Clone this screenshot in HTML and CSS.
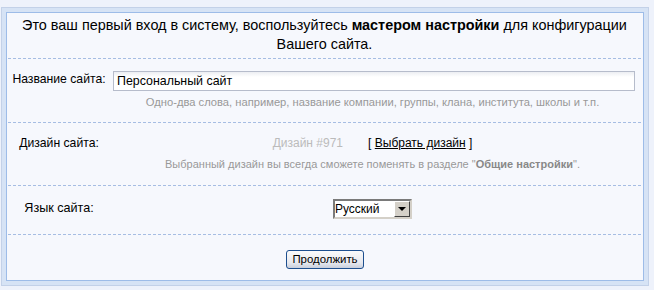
FILE: index.html
```html
<!DOCTYPE html>
<html lang="ru">
<head>
    <meta charset="UTF-8">
    <title>Мастер настройки</title>
    <link rel="stylesheet" href="styles.css">
</head>
<body>
    <div class="frame">
        <form class="panel" id="setup-form">
            <div class="intro">
                Это ваш первый вход в систему, воспользуйтесь <b>мастером настройки</b> для конфигурации Вашего сайта.
            </div>

            <div class="row row-name">
                <label class="row-label" for="site-name">Название сайта:</label>
                <div class="row-value">
                    <input type="text" id="site-name" class="text-input" value="Персональный сайт">
                    <div class="hint hint-name">Одно-два слова, например, название компании, группы, клана, института, школы и т.п.</div>
                </div>
            </div>

            <div class="row row-design">
                <div class="row-label">Дизайн сайта:</div>
                <div class="row-value">
                    <div class="design-line">
                        <span class="design-id">Дизайн #971</span>
                        <span class="design-pick">[ <a href="#">Выбрать дизайн</a> ]</span>
                    </div>
                    <div class="hint hint-design">Выбранный дизайн вы всегда сможете поменять в разделе "<b>Общие настройки</b>".</div>
                </div>
            </div>

            <div class="row row-lang">
                <label class="row-label" for="site-lang">Язык сайта:</label>
                <div class="row-value">
                    <span class="select-box">
                        <select id="site-lang" class="lang-select">
                            <option>Русский</option>
                            <option>English</option>
                        </select>
                        <span class="select-arrow"></span>
                    </span>
                </div>
            </div>

            <div class="actions">
                <button type="submit" class="continue-button">Продолжить</button>
            </div>
        </form>
    </div>
</body>
</html>
```

FILE: styles.css
```css
body {
    margin: 0;
    background-color: #eef2fb;
    font-family: "Liberation Sans", Arial, sans-serif;
    color: #000;
}
.frame {
    width: 648px;
    margin: 7px 0 0 1px;
    box-sizing: border-box;
    padding: 4px;
    background-color: #d6e3f5;
    border: 1px solid #c3d1e8;
}
.panel {
    margin: 0;
    background-color: #f6f8fd;
    border: 1px solid #9dbce8;
}
.intro {
    margin: 0 2px 0 1px;
    padding: 3px 6px 4px;
    text-align: center;
    font-size: 14.4px;
    line-height: 19px;
    border-bottom: 1px dashed #a6bde3;
}
.row {
    display: flex;
    margin: 0 2px 0 1px;
    border-bottom: 1px dashed #a6bde3;
    font-size: 11px;
    line-height: 14px;
}
.row-label {
    width: 102px;
    flex: none;
    text-align: center;
    font-size: 12.2px;
}
.row-value {
    flex: 1;
    margin-right: 6px;
    text-align: center;
}
.row-name {
    padding: 12px 0 13px;
}
.row-name .row-label {
    margin-top: 1px;
}
.text-input {
    display: block;
    box-sizing: border-box;
    width: calc(100% - 3px);
    height: 20px;
    margin-left: 3px;
    padding: 0 3px;
    border: 1px solid #b6bccb;
    background: linear-gradient(#eceef2, #fff 5px);
    font-family: "Liberation Sans", Arial, sans-serif;
    font-size: 12.4px;
    color: #000;
}
.hint {
    color: #999;
}
.hint-name {
    margin-top: 4px;
    font-size: 11.2px;
}
.row-design {
    padding: 13px 0 14px;
}
.design-id {
    color: #bbb;
    font-size: 12px;
    margin-right: 22px;
}
.design-pick {
    font-size: 12px;
}
.design-pick a {
    color: #000;
}
.hint-design {
    margin-top: 7px;
}
.hint-design b {
    color: #888;
}
.row-lang {
    padding: 13px 0 15px;
}
.row-lang .row-label {
    margin-top: 2px;
    font-size: 12.6px;
}
.select-box {
    display: inline-flex;
    box-sizing: border-box;
    width: 79px;
    height: 20px;
    border: 2px solid;
    border-color: #7a7a7a #d4d0c8 #d4d0c8 #7a7a7a;
    background-color: #fff;
}
.lang-select {
    flex: 1;
    min-width: 0;
    appearance: none;
    -webkit-appearance: none;
    border: none;
    background: transparent;
    padding: 0;
    font-family: "Liberation Sans", Arial, sans-serif;
    font-size: 12px;
    color: #000;
}
.select-arrow {
    width: 16px;
    flex: none;
    background-color: #d4d0c8;
    border: 1px solid;
    border-color: #fff #404040 #404040 #fff;
    box-sizing: border-box;
    display: flex;
    align-items: center;
    justify-content: center;
}
.select-arrow::after {
    content: "";
    border-left: 4px solid transparent;
    border-right: 4px solid transparent;
    border-top: 4px solid #000;
}
.actions {
    padding: 14px 0 11px;
    text-align: center;
}
.continue-button {
    width: 78px;
    height: 19px;
    padding: 0;
    border: 1px solid #1d4f8f;
    border-radius: 3px;
    background: linear-gradient(#fbfbfb, #e6e8ee 70%, #c9cfdc);
    font-family: "Liberation Sans", Arial, sans-serif;
    font-size: 11.4px;
    color: #000;
    cursor: pointer;
}
```
